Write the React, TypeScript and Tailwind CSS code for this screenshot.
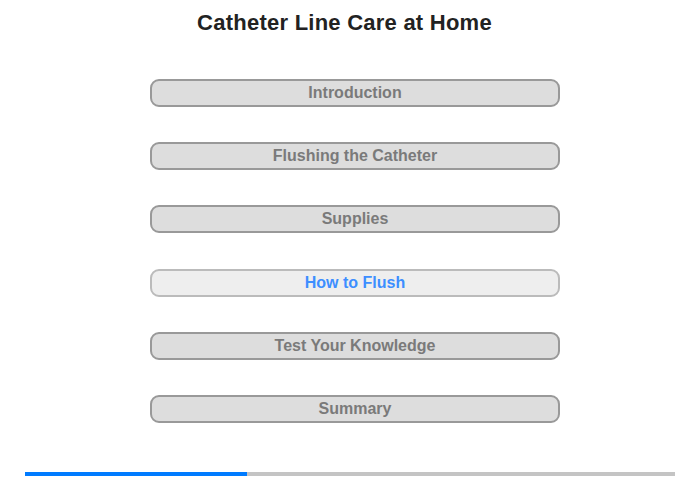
import React from "react";

const items = [
  "Introduction",
  "Flushing the Catheter",
  "Supplies",
  "How to Flush",
  "Test Your Knowledge",
  "Summary",
];

export default function App() {
  return (
    <div
      className="w-[700px] h-[480px] bg-white flex flex-col"
      style={{ fontFamily: '"Liberation Sans", Arial, sans-serif' }}
    >
      <h1 className="pt-[11px] pr-[11px] text-center text-[22px] leading-[24px] font-bold tracking-[0.24px] text-[#222]">
        Catheter Line Care at Home
      </h1>
      <div className="mt-[44px] pl-[10px] flex flex-col items-center gap-[35.2px]">
        {items.map((t) => {
          const active = t === "How to Flush";
          return (
            <div
              key={t}
              className={
                active
                  ? "w-[410px] h-[28px] rounded-[9px] border-2 border-[#bbb] bg-[#eee] flex items-center justify-center text-[16px] font-bold text-[#3d8eff]"
                  : "w-[410px] h-[28px] rounded-[9px] border-2 border-[#999] bg-[#ddd] flex items-center justify-center text-[16px] font-bold text-[#7a7a7a]"
              }
            >
              {t}
            </div>
          );
        })}
      </div>
      <div className="mt-auto mb-[4px] mx-[25px] h-[4px] bg-[#c4c4c4] flex">
        <div className="w-[222px] h-full bg-[#007bff]" />
      </div>
    </div>
  );
}
